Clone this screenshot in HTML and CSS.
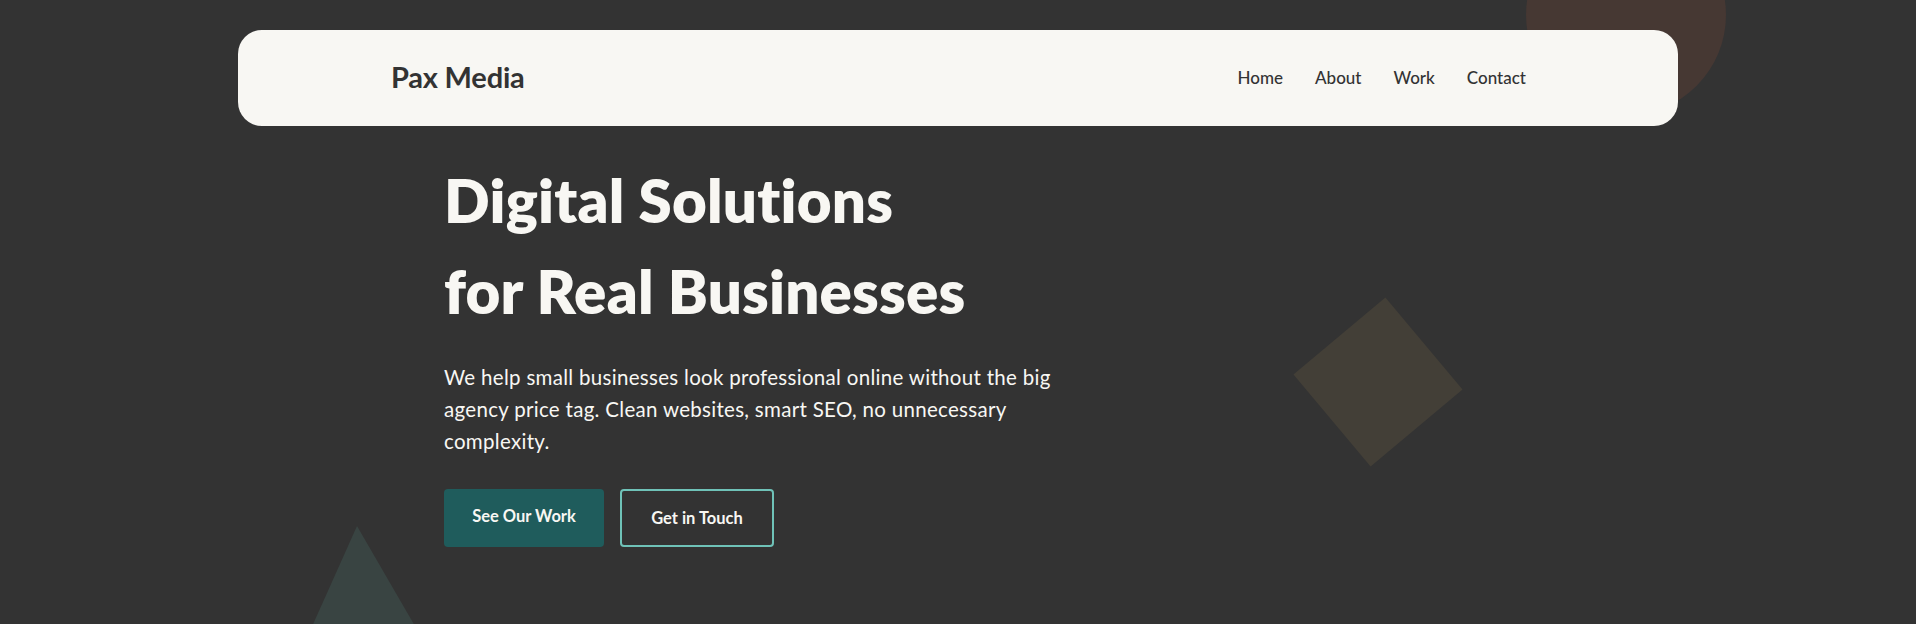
FILE: index.html
```html
<!DOCTYPE html>
<html lang="en">
<head>
<meta charset="utf-8">
<title>Pax Media</title>
<link rel="stylesheet" href="styles.css">
</head>
<body>
<div class="shape shape-circle"></div>
<div class="shape shape-diamond"></div>
<svg class="shape shape-triangle" width="160" height="120" viewBox="0 0 160 120"><polygon points="77,0 -11,172 165,172" fill="#394442" transform="rotate(-3 77 0)"/></svg>
<header class="header">
  <nav class="nav">
    <a class="logo" href="#">Pax Media</a>
    <ul class="nav-links">
      <li><a href="#">Home</a></li>
      <li><a href="#">About</a></li>
      <li><a href="#">Work</a></li>
      <li><a href="#">Contact</a></li>
    </ul>
  </nav>
</header>
<main class="hero">
  <div class="hero-inner">
    <h1 class="hero-title">Digital Solutions<br>for Real Businesses</h1>
    <p class="hero-text">We help small businesses look professional online without the big agency price tag. Clean websites, smart SEO, no unnecessary complexity.</p>
    <div class="hero-actions">
      <a class="btn btn-primary" href="#">See Our Work</a>
      <a class="btn btn-outline" href="#">Get in Touch</a>
    </div>
  </div>
</main>
</body>
</html>
```

FILE: styles.css
```css
* { box-sizing: border-box; }
html, body { margin: 0; padding: 0; }
body {
  background: #333333;
  font-family: "Lato", "Open Sans", sans-serif;
  color: #f8f7f3;
  height: 624px;
  overflow: hidden;
  position: relative;
}
a { text-decoration: none; color: inherit; }

.shape { position: absolute; z-index: 0; }
.shape-circle {
  left: 1526px;
  top: -85px;
  width: 200px;
  height: 200px;
  border-radius: 50%;
  background: #463833;
}
.shape-diamond {
  left: 1318px;
  top: 322px;
  width: 120px;
  height: 120px;
  background: #433f37;
  transform: rotate(50deg);
}
.shape-triangle {
  left: 280px;
  top: 526px;
  overflow: visible;
}

.header {
  position: relative;
  z-index: 2;
  padding-top: 30px;
}
.nav {
  max-width: 1440px;
  height: 96px;
  margin: 0 auto;
  background: #f8f7f3;
  border-radius: 24px;
  display: flex;
  align-items: center;
  justify-content: space-between;
  padding: 0 152px 0 153px;
}
.logo {
  font-size: 29px;
  font-weight: 700;
  color: #333333;
  letter-spacing: -0.2px;
  margin-top: -4px;
}
.nav-links {
  list-style: none;
  display: flex;
  gap: 32px;
  margin: -2px 0 0;
  padding: 0;
}
.nav-links a {
  font-size: 17px;
  font-weight: 500;
  color: #333333;
}

.hero {
  position: relative;
  z-index: 1;
}
.hero-inner {
  width: 1028px;
  margin: 0 auto;
  padding-top: 29px;
}
.hero-title {
  font-size: 60px;
  font-weight: 800;
  line-height: 91px;
  letter-spacing: 0.2px;
  margin: 0;
  color: #f8f7f3;
}
.hero-text {
  font-size: 20.5px;
  line-height: 32px;
  letter-spacing: 0.3px;
  width: 640px;
  margin: 24px 0 32px;
  color: #f8f7f3;
}
.hero-actions {
  display: flex;
  gap: 16px;
}
.btn {
  height: 58px;
  display: inline-flex;
  align-items: center;
  justify-content: center;
  font-size: 16.5px;
  font-weight: 700;
  border-radius: 4px;
}
.btn-primary {
  width: 160px;
  background: #1f5c5c;
  color: #f8f7f3;
  padding-bottom: 4px;
}
.btn-outline {
  width: 154px;
  border: 2px solid #6fc2b8;
  color: #f8f7f3;
}
```
